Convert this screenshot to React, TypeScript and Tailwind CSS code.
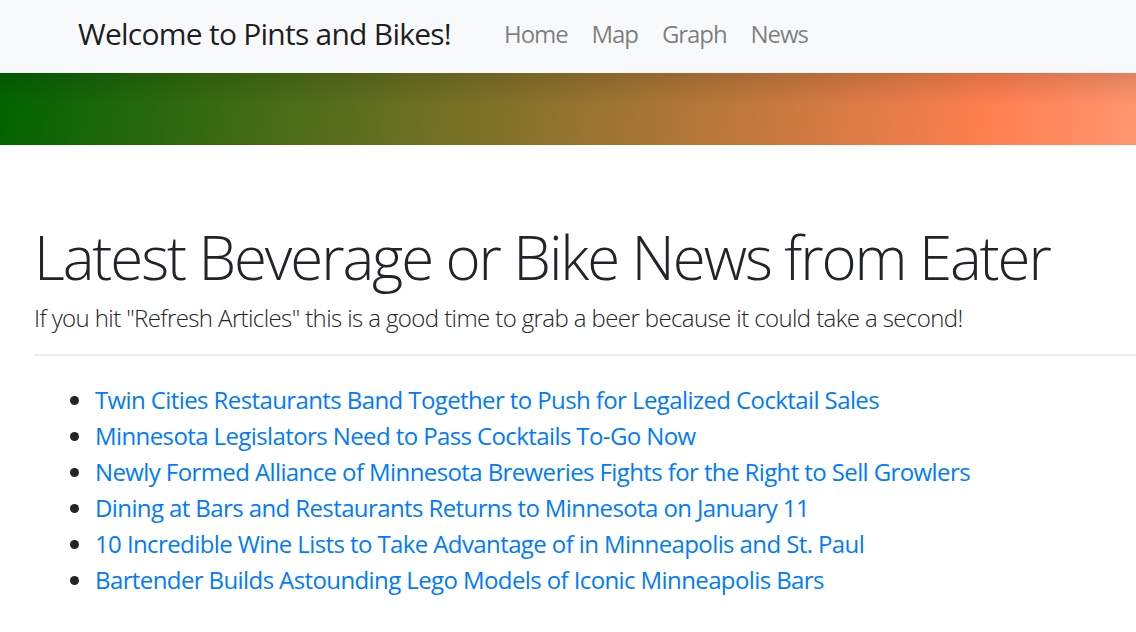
import React from "react";

const articles = [
  "Twin Cities Restaurants Band Together to Push for Legalized Cocktail Sales",
  "Minnesota Legislators Need to Pass Cocktails To-Go Now",
  "Newly Formed Alliance of Minnesota Breweries Fights for the Right to Sell Growlers",
  "Dining at Bars and Restaurants Returns to Minnesota on January 11",
  "10 Incredible Wine Lists to Take Advantage of in Minneapolis and St. Paul",
  "Bartender Builds Astounding Lego Models of Iconic Minneapolis Bars",
];

const links = ["Home", "Map", "Graph", "News"];

export default function App() {
  return (
    <div className="min-h-screen w-full overflow-hidden bg-white font-['Open_Sans',sans-serif] text-[#212529]">
      <nav className="flex h-[73px] items-center bg-[#f8f9fa] pb-[6px] pl-[78px]">
        <span className="text-[30px] leading-none tracking-[-0.025em] text-black/90">
          Welcome to Pints and Bikes!
        </span>
        <ul className="ml-[41px] flex items-center">
          {links.map((l) => (
            <li key={l}>
              <a className="block px-3 text-[24px] leading-none tracking-[-0.045em] text-black/50" href="#">
                {l}
              </a>
            </li>
          ))}
        </ul>
      </nav>
      <div className="h-[72px] w-full bg-[linear-gradient(to_bottom,rgba(0,0,0,0.12),rgba(0,0,0,0)_45%),linear-gradient(97deg,#006400_0%,#ff7f50_87%,#ff9670_100%)]" />
      <main className="pl-[34px] pt-[76px]">
        <h1 className="whitespace-nowrap text-[60px] font-light leading-[1.2] tracking-[-0.035em]">
          Latest Beverage or Bike News from Eater
        </h1>
        <p className="mt-[7px] whitespace-nowrap text-[24px] font-light leading-[1.5] tracking-[-0.025em]">
          If you hit "Refresh Articles" this is a good time to grab a beer because it could take a second!
        </p>
        <hr className="mt-[18px] border-t-2 border-[#ebebeb]" />
        <ul className="mt-[26px]">
          {articles.map((a) => (
            <li key={a} className="flex h-[36px] items-center">
              <span className="ml-[36px] mr-[16px] h-[9px] w-[9px] rounded-full bg-[#212529]" />
              <a href="#" className="text-[24px] leading-[1.5] tracking-[-0.025em] text-[#007bff]">
                {a}
              </a>
            </li>
          ))}
        </ul>
      </main>
    </div>
  );
}
